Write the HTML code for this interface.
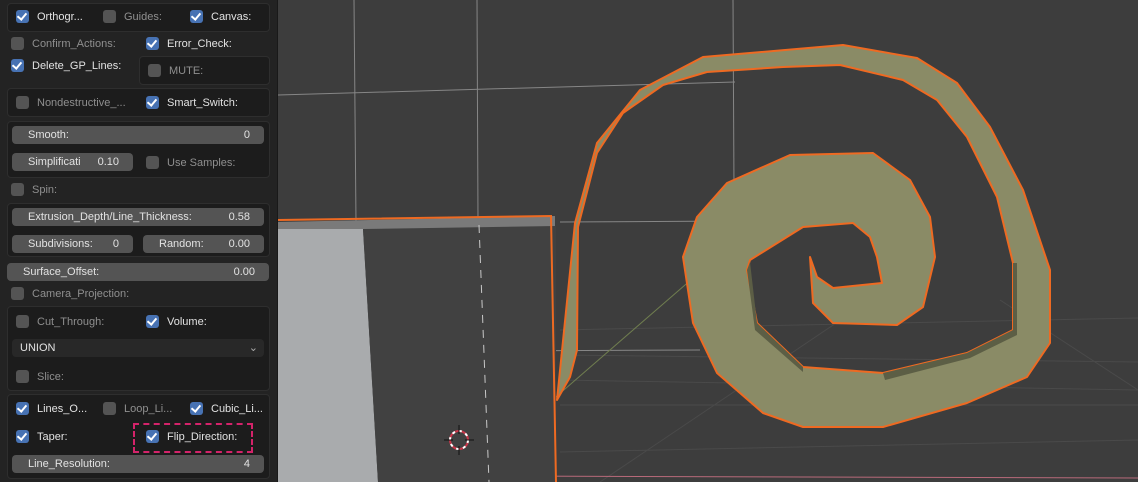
<!DOCTYPE html>
<html><head><meta charset="utf-8"><style>
*{margin:0;padding:0;box-sizing:border-box}
body{width:1138px;height:482px;overflow:hidden;background:#3d3d3d;position:relative;font-family:"Liberation Sans","DejaVu Sans",sans-serif;font-size:11px;color:#e2e2e2}
#panel{position:absolute;left:0;top:0;width:278px;height:482px;background:#232323;border-right:1px solid #191919}
.box{position:absolute;background:#1c1c1c;border:1px solid #2e2e2e;border-radius:4px}
.cb{position:absolute;width:13px;height:13px;border-radius:3px;background:#545454}
.cb.on{background:#4772b3}
.cb.on::after{content:"";position:absolute;left:3px;top:1px;width:4px;height:7px;border:solid #fff;border-width:0 2px 2px 0;transform:rotate(40deg)}
.t{position:absolute;line-height:13px;white-space:nowrap;margin-top:1px}
.g{color:#8f8f8f}
.sl{position:absolute;height:18px;background:#545454;border-radius:4px;line-height:19px;padding:0 16px;color:#e2e2e2}
.sl span{position:absolute;right:14px;top:0}
svg{position:absolute;left:0;top:0}
</style></head><body>
<svg width="1138" height="482">
<g stroke="#8e8e8e" stroke-width="1" fill="none" opacity=".9">
<line x1="354" y1="0" x2="356" y2="222"/><line x1="477" y1="0" x2="478" y2="220"/>
<line x1="733" y1="0" x2="734" y2="190"/><line x1="278" y1="95" x2="735" y2="82"/>
<line x1="484" y1="351" x2="700" y2="350"/>
<line x1="560" y1="222" x2="735" y2="221"/>
</g>
<g stroke="#4a4a4a" stroke-width="1" fill="none">
<line x1="560" y1="405" x2="1138" y2="405"/><line x1="560" y1="380" x2="1138" y2="390"/>
<line x1="560" y1="355" x2="1138" y2="362"/><line x1="560" y1="330" x2="1138" y2="318"/>
<line x1="560" y1="452" x2="1138" y2="440"/><line x1="600" y1="482" x2="900" y2="280"/>
<line x1="1000" y1="300" x2="1138" y2="390"/>
</g>
<line x1="520" y1="428" x2="700" y2="272" stroke="#6f7d4f" stroke-width="1"/>
<line x1="490" y1="438" x2="520" y2="428" stroke="#8a8a6a"/>
<line x1="490" y1="476" x2="1138" y2="478" stroke="#b86a7a"/>
<polygon points="278,222 555,216 555,228 278,230" fill="#7a7a7a"/>
<polygon points="278,229 363,229 378,482 278,482" fill="#a9abad"/>
<polygon points="363,229 556,226 556,482 378,482" fill="#414141"/>
<line x1="479" y1="225" x2="489" y2="482" stroke="#c8c8c8" stroke-dasharray="8,7"/>
<path d="M278,220 L551,216 L556,482" stroke="#ee6a22" stroke-width="2" fill="none"/>
<circle cx="459" cy="440" r="9" fill="none" stroke="#c8374a" stroke-width="2"/>
<circle cx="459" cy="440" r="9" fill="none" stroke="#fff" stroke-width="2" stroke-dasharray="3,4"/>
<path d="M459,425v9M459,446v9M444,440h9M465,440h9" stroke="#111" stroke-width="1"/>
<polygon fill="#8a8b66" stroke="#ee6a22" stroke-width="2" stroke-linejoin="round" points="557,400 575,223 597,143 640,90 703,57 843,45 917,58 957,83 990,127 1023,190 1050,270 1050,343 1027,377 967,403 883,427 803,427 763,413 717,373 693,323 683,257 697,217 727,183 790,155 873,153 910,180 930,217 935,257 923,307 897,325 833,323 813,303 810,257 817,277 833,288 882,283 877,257 870,237 853,223 803,227 750,260 747,270 757,323 803,367 883,373 967,353 1013,330 1013,263 997,197 967,137 937,100 903,80 840,65 783,67 707,72 663,85 623,113 597,153 578,227 577,350 570,377"/>
<polygon fill="#5c5e45" points="747,270 750,262 757,323 803,367 803,372 755,330"/>
<polygon fill="#5c5e45" points="883,373 967,353 1013,330 1013,263 1017,263 1017,335 970,358 885,380"/>
</svg>
<div id="panel">
<div class="box" style="left:7px;top:3px;width:263px;height:29px"></div>
<div class="cb on" style="left:16px;top:10px"></div><div class="t" style="left:37px;top:10px">Orthogr...</div>
<div class="cb" style="left:103px;top:10px"></div><div class="t g" style="left:124px;top:10px">Guides:</div>
<div class="cb on" style="left:190px;top:10px"></div><div class="t" style="left:211px;top:10px">Canvas:</div>

<div class="cb" style="left:11px;top:37px"></div><div class="t g" style="left:32px;top:37px">Confirm_Actions:</div>
<div class="cb on" style="left:146px;top:37px"></div><div class="t" style="left:167px;top:37px">Error_Check:</div>
<div class="cb on" style="left:11px;top:59px"></div><div class="t" style="left:32px;top:59px">Delete_GP_Lines:</div>
<div class="box" style="left:139px;top:56px;width:131px;height:29px"></div>
<div class="cb" style="left:148px;top:64px"></div><div class="t g" style="left:169px;top:64px">MUTE:</div>

<div class="box" style="left:7px;top:88px;width:263px;height:29px"></div>
<div class="cb" style="left:16px;top:96px"></div><div class="t g" style="left:37px;top:96px">Nondestructive_...</div>
<div class="cb on" style="left:146px;top:96px"></div><div class="t" style="left:167px;top:96px">Smart_Switch:</div>

<div class="box" style="left:7px;top:121px;width:263px;height:57px"></div>
<div class="sl" style="left:12px;top:126px;width:252px">Smooth:<span>0</span></div>
<div class="sl" style="left:12px;top:153px;width:121px">Simplificati<span>0.10</span></div>
<div class="cb" style="left:146px;top:156px"></div><div class="t g" style="left:167px;top:156px">Use Samples:</div>

<div class="cb" style="left:11px;top:183px"></div><div class="t g" style="left:32px;top:183px">Spin:</div>

<div class="box" style="left:7px;top:203px;width:263px;height:54px"></div>
<div class="sl" style="left:12px;top:208px;width:252px">Extrusion_Depth/Line_Thickness:<span>0.58</span></div>
<div class="sl" style="left:12px;top:235px;width:121px">Subdivisions:<span>0</span></div>
<div class="sl" style="left:143px;top:235px;width:121px">Random:<span>0.00</span></div>

<div class="sl" style="left:7px;top:263px;width:262px">Surface_Offset:<span>0.00</span></div>
<div class="cb" style="left:11px;top:287px"></div><div class="t g" style="left:32px;top:287px">Camera_Projection:</div>

<div class="box" style="left:7px;top:306px;width:263px;height:85px"></div>
<div class="cb" style="left:16px;top:315px"></div><div class="t g" style="left:37px;top:315px">Cut_Through:</div>
<div class="cb on" style="left:146px;top:315px"></div><div class="t" style="left:167px;top:315px">Volume:</div>
<div class="sl" style="left:12px;top:339px;width:252px;background:#282828;padding-left:8px">UNION<span style="right:6px;color:#aaa">&#8964;</span></div>
<div class="cb" style="left:16px;top:370px"></div><div class="t g" style="left:37px;top:370px">Slice:</div>

<div class="box" style="left:7px;top:394px;width:263px;height:85px"></div>
<div class="cb on" style="left:16px;top:402px"></div><div class="t" style="left:37px;top:402px">Lines_O...</div>
<div class="cb" style="left:103px;top:402px"></div><div class="t g" style="left:124px;top:402px">Loop_Li...</div>
<div class="cb on" style="left:190px;top:402px"></div><div class="t" style="left:211px;top:402px">Cubic_Li...</div>
<div class="cb on" style="left:16px;top:430px"></div><div class="t" style="left:37px;top:430px">Taper:</div>
<div style="position:absolute;left:133px;top:423px;width:120px;height:30px;border:2px dashed #d4236a"></div>
<div class="cb on" style="left:146px;top:430px"></div><div class="t" style="left:167px;top:430px">Flip_Direction:</div>
<div class="sl" style="left:12px;top:455px;width:252px">Line_Resolution:<span>4</span></div>
</div>
</body></html>
